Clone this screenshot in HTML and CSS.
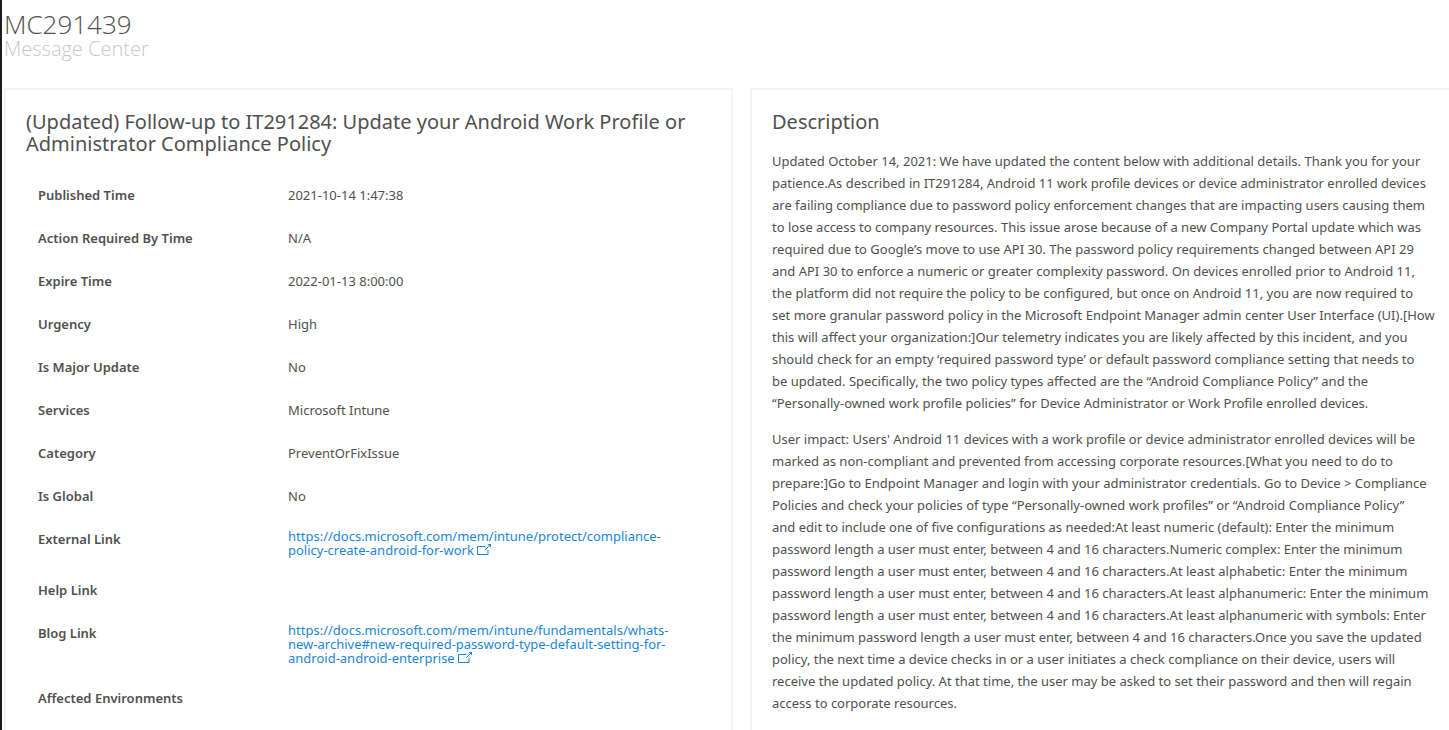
FILE: index.html
```html
<!DOCTYPE html>
<html lang="en">
<head>
    <meta charset="UTF-8">
    <meta name="viewport" content="width=device-width, initial-scale=1.0">
    <title>MC291439 - Message Center</title>
    <link rel="stylesheet" href="styles.css">
</head>
<body>
    <svg class="sprite" aria-hidden="true">
        <symbol id="popout" viewBox="0 0 14 12">
            <path d="M8.500 2.500H.5v8h10.500V6" fill="none" stroke="currentColor"/>
            <path d="M8 6l4.500-4.500" fill="none" stroke="currentColor"/>
            <path d="M10.500 0H14v3.500z" fill="currentColor"/>
        </symbol>
    </svg>
    <header class="page-header">
        <h1>MC291439</h1>
        <p class="subtitle">Message Center</p>
    </header>
    <main class="panels">
        <section class="panel">
            <h2>(Updated) Follow-up to IT291284: Update your Android Work Profile or Administrator Compliance Policy</h2>
            <table class="details">
                <tr><th scope="row">Published Time</th><td>2021-10-14 1:47:38</td></tr>
                <tr><th scope="row">Action Required By Time</th><td>N/A</td></tr>
                <tr><th scope="row">Expire Time</th><td>2022-01-13 8:00:00</td></tr>
                <tr><th scope="row">Urgency</th><td>High</td></tr>
                <tr><th scope="row">Is Major Update</th><td>No</td></tr>
                <tr><th scope="row">Services</th><td>Microsoft Intune</td></tr>
                <tr><th scope="row">Category</th><td>PreventOrFixIssue</td></tr>
                <tr><th scope="row">Is Global</th><td>No</td></tr>
                <tr>
                    <th scope="row">External Link</th>
                    <td class="link-cell"><a href="https://docs.microsoft.com/mem/intune/protect/compliance-policy-create-android-for-work">https://docs.microsoft.com/mem/intune/protect/compliance-<br>policy-create-android-for-work <svg class="icon"><use href="#popout"/></svg></a></td>
                </tr>
                <tr><th scope="row">Help Link</th><td></td></tr>
                <tr>
                    <th scope="row">Blog Link</th>
                    <td class="link-cell"><a href="https://docs.microsoft.com/mem/intune/fundamentals/whats-new-archive#new-required-password-type-default-setting-for-android-android-enterprise">https://docs.microsoft.com/mem/intune/fundamentals/whats-<br>new-archive#new-required-password-type-default-setting-for-<br>android-android-enterprise <svg class="icon"><use href="#popout"/></svg></a></td>
                </tr>
                <tr><th scope="row">Affected Environments</th><td></td></tr>
            </table>
        </section>
        <section class="panel">
            <h2>Description</h2>
            <div class="description">
                <p>Updated October 14, 2021: We have updated the content below with additional details. Thank you for your<br>
                patience.As described in IT291284, Android 11 work profile devices or device administrator enrolled devices<br>
                are failing compliance due to password policy enforcement changes that are impacting users causing them<br>
                to lose access to company resources. This issue arose because of a new Company Portal update which was<br>
                required due to Google’s move to use API 30. The password policy requirements changed between API 29<br>
                and API 30 to enforce a numeric or greater complexity password. On devices enrolled prior to Android 11,<br>
                the platform did not require the policy to be configured, but once on Android 11, you are now required to<br>
                set more granular password policy in the Microsoft Endpoint Manager admin center User Interface (UI).[How<br>
                this will affect your organization:]Our telemetry indicates you are likely affected by this incident, and you<br>
                should check for an empty ‘required password type’ or default password compliance setting that needs to<br>
                be updated. Specifically, the two policy types affected are the “Android Compliance Policy” and the<br>
                “Personally-owned work profile policies” for Device Administrator or Work Profile enrolled devices.</p>
                <p>User impact: Users' Android 11 devices with a work profile or device administrator enrolled devices will be<br>
                marked as non-compliant and prevented from accessing corporate resources.[What you need to do to<br>
                prepare:]Go to Endpoint Manager and login with your administrator credentials. Go to Device &gt; Compliance<br>
                Policies and check your policies of type “Personally-owned work profiles” or “Android Compliance Policy”<br>
                and edit to include one of five configurations as needed:At least numeric (default): Enter the minimum<br>
                password length a user must enter, between 4 and 16 characters.Numeric complex: Enter the minimum<br>
                password length a user must enter, between 4 and 16 characters.At least alphabetic: Enter the minimum<br>
                password length a user must enter, between 4 and 16 characters.At least alphanumeric: Enter the minimum<br>
                password length a user must enter, between 4 and 16 characters.At least alphanumeric with symbols: Enter<br>
                the minimum password length a user must enter, between 4 and 16 characters.Once you save the updated<br>
                policy, the next time a device checks in or a user initiates a check compliance on their device, users will<br>
                receive the updated policy. At that time, the user may be asked to set their password and then will regain<br>
                access to corporate resources.</p>
            </div>
        </section>
    </main>
</body>
</html>
```
FILE: styles.css
```css
* {
    box-sizing: border-box;
}
body {
    font-family: 'Segoe UI', 'Noto Sans', sans-serif;
    font-size: 13px;
    line-height: 20px;
    color: #505050;
    background: #fff;
    margin: 0;
    padding-left: 2px;
    border-left: 2px solid #1b1b1f;
    min-height: 100vh;
    overflow: hidden;
}
h1, h2, p {
    margin: 0;
}
.sprite {
    display: none;
}
.page-header {
    padding-top: 8px;
    height: 88px;
}
h1 {
    font-family: 'Segoe UI', 'Open Sans', sans-serif;
    font-size: 26px;
    font-weight: 300;
    line-height: 32px;
}
.subtitle {
    font-family: 'Segoe UI', 'Open Sans', sans-serif;
    font-size: 20px;
    font-weight: 300;
    line-height: 18px;
    color: #c8c8c8;
}
/* the second panel runs past the right edge of the window */
.panels {
    display: grid;
    grid-template-columns: 1fr 1fr;
    gap: 17px;
    margin-right: -30px;
}
.panel {
    border: 2px solid #f4f4f4;
    padding: 21px 20px;
}
h2 {
    font-size: 20px;
    font-weight: 400;
    line-height: 22px;
}
.details {
    width: 100%;
    table-layout: fixed;
    border-collapse: collapse;
    margin-top: 19px;
}
.details th,
.details td {
    padding: 11px 12px 12px;
    height: 43px;
    text-align: left;
    vertical-align: top;
}
.details th {
    width: 250px;
    font-weight: 600;
}
.details .link-cell {
    line-height: 14px;
}
a {
    color: #1a86d9;
    text-decoration: none;
}
.icon {
    width: 14px;
    height: 12px;
    vertical-align: -1px;
}
.description {
    margin-top: 17px;
    line-height: 22px;
    white-space: nowrap;
}
.description p + p {
    margin-top: 14px;
}
```
